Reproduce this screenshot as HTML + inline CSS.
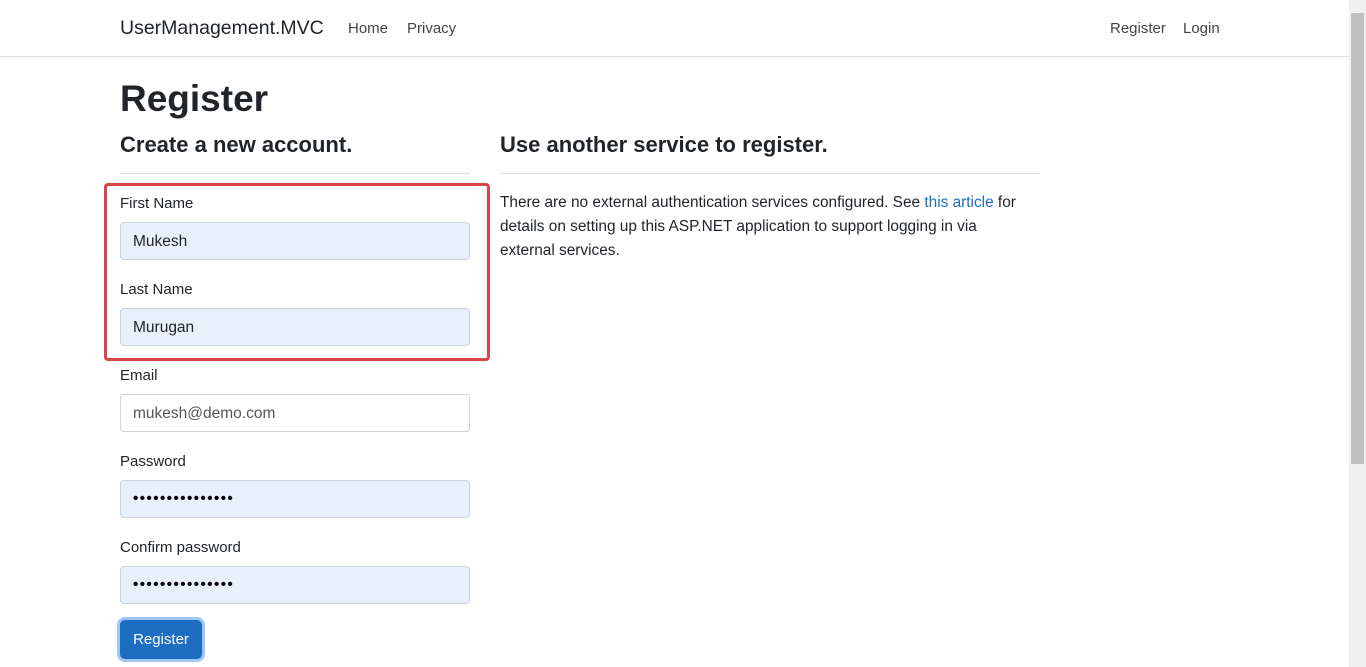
<!DOCTYPE html>
<html><head><meta charset="utf-8"><style>
*{margin:0;padding:0;box-sizing:border-box}
body{width:1366px;height:667px;overflow:hidden;background:#fff;font-family:"Liberation Sans",sans-serif;color:#212529;position:relative}
.a{position:absolute;white-space:nowrap}
.nav{position:absolute;left:0;top:0;width:1349px;height:57px;border-bottom:1px solid #dee2e6;box-shadow:0 2px 4px rgba(0,0,0,.05)}
.lbl{font-size:15px;color:#212529}
.in{position:absolute;left:120px;width:350px;height:38px;border:1px solid #ced4da;border-radius:4px;background:#e8f0fe;font-size:15.5px;padding:10px 12px 0;color:#212529}
.dots{font-size:15px;font-weight:bold;letter-spacing:1.5px;padding-top:9px;color:#000}
hr{position:absolute;border:0;border-top:1px solid #dee2e6;height:0}
</style></head><body>
<div class="nav"></div>
<div class="a" style="left:120px;top:17px;font-size:19.5px;color:#212529">UserManagement.MVC</div>
<div class="a" style="left:348px;top:20px;font-size:15px;color:#444">Home</div>
<div class="a" style="left:407px;top:20px;font-size:15px;color:#444">Privacy</div>
<div class="a" style="left:1110px;top:20px;font-size:15px;color:#444">Register</div>
<div class="a" style="left:1183px;top:20px;font-size:15px;color:#444">Login</div>
<div class="a" style="left:120px;top:78px;font-size:37px;font-weight:bold">Register</div>
<div class="a" style="left:120px;top:132px;font-size:22px;font-weight:bold">Create a new account.</div>
<hr style="left:120px;top:173px;width:350px">
<div class="a" style="left:500px;top:132px;font-size:22px;font-weight:bold">Use another service to register.</div>
<hr style="left:500px;top:173px;width:540px">
<div class="a" style="left:500px;top:191px;font-size:15.4px;line-height:24px">There are no external authentication services configured. See <span style="color:#1b6ec2">this article</span> for<br>details on setting up this ASP.NET application to support logging in via<br>external services.</div>
<div style="position:absolute;left:104px;top:183px;width:386px;height:178px;border:3px solid #d9434a;border-radius:4px"></div>
<div class="a lbl" style="left:120px;top:195px">First Name</div>
<div class="in" style="top:222px">Mukesh</div>
<div class="a lbl" style="left:120px;top:281px">Last Name</div>
<div class="in" style="top:308px">Murugan</div>
<div class="a lbl" style="left:120px;top:367px">Email</div>
<div class="in" style="top:394px;background:#fff;color:#555">mukesh@demo.com</div>
<div class="a lbl" style="left:120px;top:453px">Password</div>
<div class="in dots" style="top:480px">•••••••••••••••</div>
<div class="a lbl" style="left:120px;top:539px">Confirm password</div>
<div class="in dots" style="top:566px">•••••••••••••••</div>
<div style="position:absolute;left:120px;top:620px;width:82px;height:39px;border-radius:5px;background:#1b6ec2;box-shadow:0 0 0 3px #9ec5f5;color:#fff;font-size:15px;text-align:center;line-height:39px">Register</div>
<div style="position:absolute;left:1349px;top:0;width:17px;height:667px;background:#f0f0f0"></div>
<div style="position:absolute;left:1351px;top:13px;width:13px;height:451px;background:#c1c1c1"></div>
</body></html>
